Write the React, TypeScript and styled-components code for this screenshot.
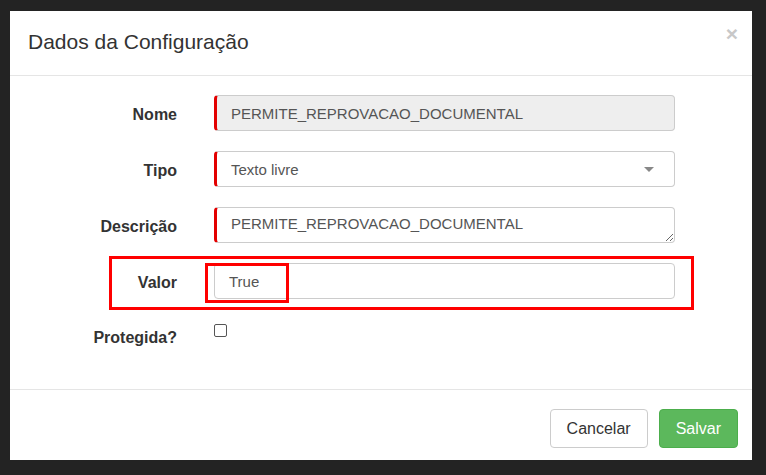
import React from "react";
import styled, { createGlobalStyle } from "styled-components";

const GlobalStyle = createGlobalStyle`
  html, body {
    margin: 0;
    padding: 0;
    background: #232323;
  }
  body {
    font-family: "Liberation Sans", Arial, Helvetica, sans-serif;
    color: #333;
  }
  * {
    box-sizing: border-box;
  }
`;

const Backdrop = styled.div`
  width: 766px;
  height: 475px;
  padding: 11px 0 0 10px;
  overflow: hidden;
`;

const Modal = styled.div`
  width: 742px;
  height: 449px;
  background: #fff;
  display: flex;
  flex-direction: column;
`;

const Header = styled.div`
  height: 65px;
  display: flex;
  align-items: center;
  justify-content: space-between;
  padding: 0 14px 0 18px;
  border-bottom: 1px solid #e5e5e5;
`;

const Title = styled.h4`
  margin: 0;
  font-size: 21px;
  font-weight: normal;
  color: #333;
  line-height: 1;
  padding-bottom: 3px;
`;

const Close = styled.span`
  align-self: flex-start;
  margin-top: 12px;
  font-size: 21px;
  font-weight: bold;
  line-height: 1;
  color: #c8c8c8;
`;

const Body = styled.div`
  flex: 1;
  padding: 19px 0 0;
  display: flex;
  flex-direction: column;
  gap: 20px;
`;

const Row = styled.div<{ $top?: boolean }>`
  position: relative;
  display: grid;
  grid-template-columns: 167px 461px;
  column-gap: 37px;
  align-items: ${(p) => (p.$top ? "start" : "center")};
`;

const Label = styled.label<{ $pad?: boolean }>`
  text-align: right;
  font-size: 16px;
  font-weight: bold;
  color: #333;
  padding-top: ${(p) => (p.$pad ? "10px" : "3px")};
`;

const Field = styled.div<{ $required?: boolean; $disabled?: boolean }>`
  position: relative;
  height: 36px;
  display: flex;
  align-items: center;
  justify-content: space-between;
  padding: 0 20px 0 14px;
  font-size: 15px;
  color: #555;
  background: ${(p) => (p.$disabled ? "#eee" : "#fff")};
  border: 1px solid #ccc;
  border-left: ${(p) => (p.$required ? "3px solid #e30000" : "1px solid #ccc")};
  border-radius: 4px;
`;

const TextArea = styled.textarea`
  height: 36px;
  width: 100%;
  resize: vertical;
  padding: 7px 14px 0;
  font-family: "Liberation Sans", Arial, Helvetica, sans-serif;
  font-size: 15px;
  color: #555;
  border: 1px solid #ccc;
  border-left: 3px solid #e30000;
  border-radius: 4px;
  overflow: hidden;
  outline: none;
`;

const Caret = styled.span`
  width: 0;
  height: 0;
  border-left: 5px solid transparent;
  border-right: 5px solid transparent;
  border-top: 5px solid #888;
`;

const Checkbox = styled.span`
  display: block;
  width: 13px;
  height: 13px;
  margin-top: 5px;
  border: 1px solid #555;
  border-radius: 2px;
  background: #fff;
`;

const Highlight = styled.span<{ $kind: "row" | "value" }>`
  position: absolute;
  border: 3px solid #f00;
  pointer-events: none;
  ${(p) =>
    p.$kind === "row"
      ? `left: 99px; right: 58px; top: -7px; bottom: -11px;`
      : `left: -10px; top: -1px; width: 84px; height: 40px;`}
`;

const Footer = styled.div`
  border-top: 1px solid #e5e5e5;
  display: flex;
  justify-content: flex-end;
  gap: 11px;
  padding: 19px 14px 12px;
  margin-top: 40px;
`;

const Button = styled.button<{ $primary?: boolean }>`
  height: 39px;
  padding: 0 16px;
  font-family: "Liberation Sans", Arial, Helvetica, sans-serif;
  font-size: 16px;
  border-radius: 4px;
  border: 1px solid ${(p) => (p.$primary ? "#4cae4c" : "#ccc")};
  background: ${(p) => (p.$primary ? "#5cb85c" : "#fff")};
  color: ${(p) => (p.$primary ? "#fff" : "#333")};
`;

const App = () => {
  return (
    <>
      <GlobalStyle />
      <Backdrop>
        <Modal>
          <Header>
            <Title>Dados da Configuração</Title>
            <Close>×</Close>
          </Header>
          <Body>
            <Row>
              <Label>Nome</Label>
              <Field $required $disabled>
                PERMITE_REPROVACAO_DOCUMENTAL
              </Field>
            </Row>
            <Row>
              <Label>Tipo</Label>
              <Field $required>
                Texto livre
                <Caret />
              </Field>
            </Row>
            <Row>
              <Label>Descrição</Label>
              <TextArea defaultValue="PERMITE_REPROVACAO_DOCUMENTAL" rows={1} />
            </Row>
            <Row>
              <Highlight $kind="row" />
              <Label>Valor</Label>
              <Field>
                True
                <Highlight $kind="value" />
              </Field>
            </Row>
            <Row $top>
              <Label $pad>Protegida?</Label>
              <Checkbox />
            </Row>
          </Body>
          <Footer>
            <Button>Cancelar</Button>
            <Button $primary>Salvar</Button>
          </Footer>
        </Modal>
      </Backdrop>
    </>
  );
};

export default App;
